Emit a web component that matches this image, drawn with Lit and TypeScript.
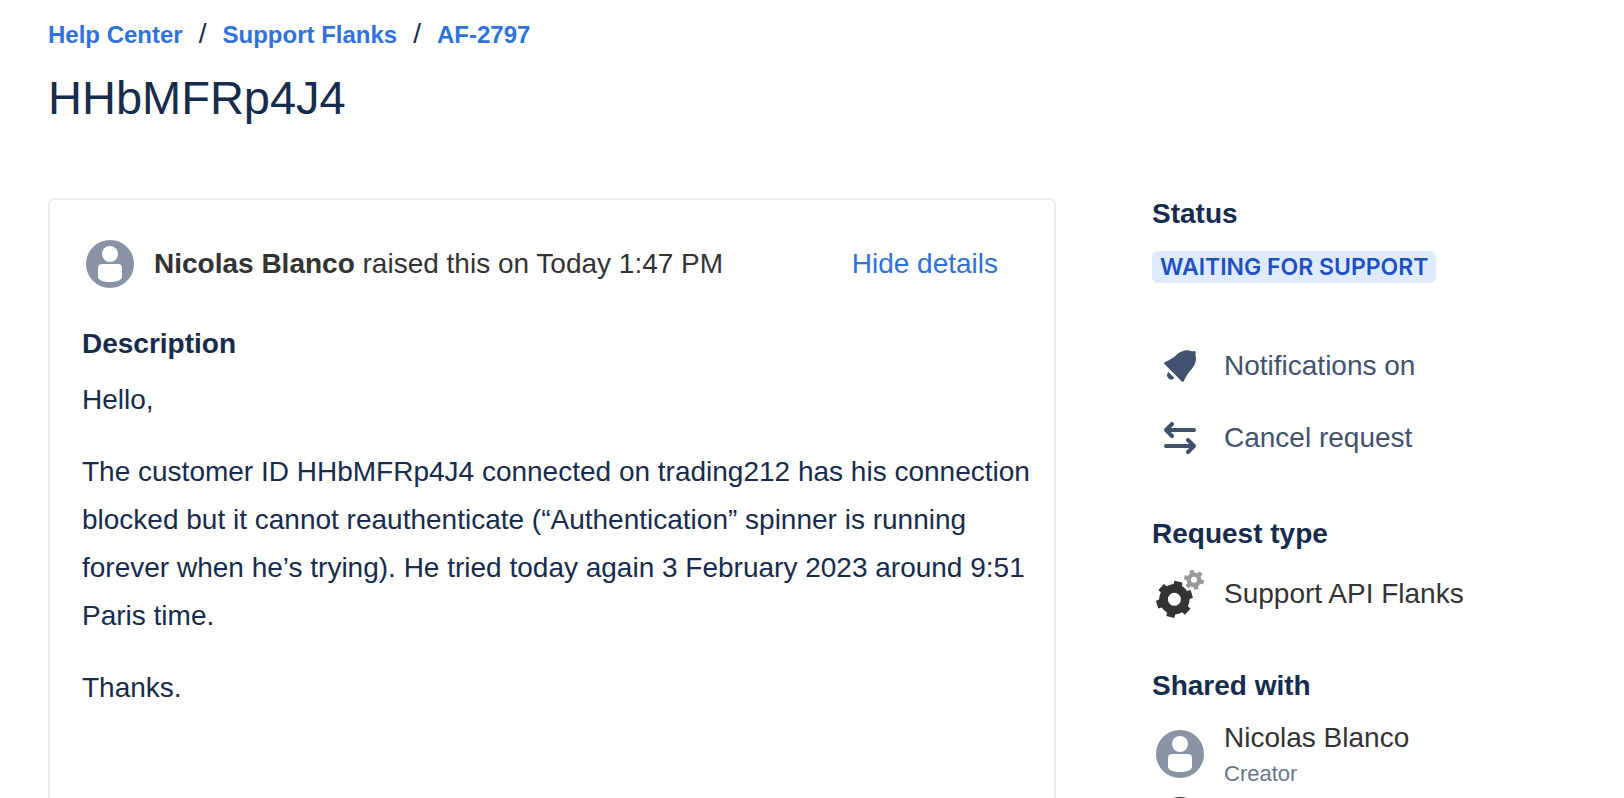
import { LitElement, html, svg, css } from "lit";
import { customElement, state } from "lit/decorators.js";

/** Outline of a toothed wheel centred on (cx, cy). */
function gearPath(cx: number, cy: number, outer: number, root: number, hole: number, teeth: number, turn: number): string {
  const point = (r: number, a: number) => `${(cx + r * Math.cos(a)).toFixed(2)} ${(cy + r * Math.sin(a)).toFixed(2)}`;
  const step = (Math.PI * 2) / teeth;
  const parts: string[] = [];
  for (let i = 0; i < teeth; i++) {
    const a = turn + i * step;
    parts.push(`${i ? "L" : "M"}${point(root, a - step * 0.27)}`);
    parts.push(`L${point(outer, a - step * 0.21)}`);
    parts.push(`L${point(outer, a + step * 0.21)}`);
    parts.push(`L${point(root, a + step * 0.27)}`);
    parts.push(`A${root} ${root} 0 0 1 ${point(root, a + step * 0.73)}`);
  }
  parts.push(`ZM${cx - hole} ${cy}a${hole} ${hole} 0 1 0 ${hole * 2} 0a${hole} ${hole} 0 1 0 ${-hole * 2} 0Z`);
  return parts.join("");
}

const rad = (deg: number) => (deg * Math.PI) / 180;

const personIcon = (fill: string) => html`<svg class="icon" viewBox="0 0 48 48" aria-hidden="true">
  <circle cx="24" cy="24" r="24" fill=${fill}></circle>
  <circle cx="24" cy="14" r="8" fill="#fff"></circle>
  <path d="M12 28a4 4 0 0 1 4-4h16a4 4 0 0 1 4 4v9c0 3-6 5-12 5s-12-2-12-5z" fill="#fff"></path>
</svg>`;

const bellIcon = html`<svg class="icon" viewBox="0 0 48 48" aria-hidden="true">
  <path d="M8.500 22 25.800 39.400c.6.6 1.500.5 1.900-.2C30.300 34.800 31.300 31.600 34.800 28 39 23.800 41.200 18.400 39.300 12.300c.8-1 .7-2-.1-2.800-.8-.7-1.900-.8-2.800-.1C30.500 7 25.400 8.500 20.700 12.800 17.200 16 14 18 8.800 20.200c-.8.400-.9 1.200-.3 1.800z" fill="currentColor"></path>
  <path d="M12.600 30.600a3.600 3.600 0 0 0 5.200 5.400z" fill="currentColor" stroke="currentColor" stroke-width="1" stroke-linejoin="round"></path>
</svg>`;

const swapIcon = html`<svg class="icon" viewBox="0 0 48 48" aria-hidden="true">
  <path d="M38 16H10M16 10l-6 6 6 6M10 32h28M32 26l6 6-6 6" fill="none" stroke="currentColor" stroke-width="4" stroke-linecap="round" stroke-linejoin="round"></path>
</svg>`;

const gearsIcon = html`<svg class="icon" viewBox="0 0 48 48" aria-hidden="true">
  ${svg`<path fill="#333" fill-rule="evenodd" d=${gearPath(18.4, 29.3, 18.6, 15.2, 6.5, 6, rad(-77))}></path>
  <path fill="#999" fill-rule="evenodd" d=${gearPath(38, 9.8, 10.2, 7.4, 3, 6, rad(-105))}></path>`}
</svg>`;

@customElement("app-root")
export class AppRoot extends LitElement {
  @state() private open = true;

  static styles = css`
    :host {
      display: block;
      box-sizing: border-box;
      height: 100vh;
      overflow: hidden;
      padding: 16px 48px 0;
      background: #fff;
      color: #172b4d;
      font: 28px/32px Arial, "Liberation Sans", sans-serif;
    }
    a {
      color: #2f72de;
      text-decoration: none;
    }
    button {
      border: 0;
      padding: 0;
      background: none;
      font: inherit;
      color: inherit;
      text-align: left;
      cursor: pointer;
    }
    h1, h2, p, ol, ul {
      margin: 0;
      padding: 0;
      list-style: none;
    }
    h1 {
      margin-top: 17px;
      font-size: 47px;
      line-height: 56px;
      font-weight: 400;
    }
    h2 {
      font-size: 28px;
      line-height: 32px;
      font-weight: 700;
    }
    .crumbs {
      display: flex;
      align-items: baseline;
      line-height: 36px;
    }
    .crumbs a {
      font-size: 24px;
      font-weight: 700;
    }
    .crumbs li + li::before {
      content: "/";
      padding: 0 16px;
    }
    .layout {
      display: grid;
      grid-template-columns: minmax(0, 1fr) 424px;
      column-gap: 96px;
      margin-top: 72px;
    }
    .card {
      min-height: 100vh;
      box-sizing: border-box;
      border: 2px solid #ebecf0;
      border-radius: 6px;
      padding: 36px 20px 36px 32px;
    }
    .raised {
      display: flex;
      align-items: center;
      gap: 16px;
      padding-right: 36px;
      margin-bottom: 36px;
      color: #333;
    }
    .raised p {
      flex: 1;
    }
    .toggle {
      color: #2f72de;
    }
    .icon {
      display: block;
      width: 48px;
      height: 48px;
      margin: 4px;
      flex: none;
    }
    .body {
      display: grid;
      gap: 24px;
      margin-top: 16px;
      line-height: 48px;
    }
    .lozenge {
      display: block;
      width: fit-content;
      margin-top: 21px;
      padding: 0 8px;
      border-radius: 6px;
      background: #deebff;
      color: #1f4fc4;
      font: 600 23px/32px Inter, sans-serif;
      text-transform: uppercase;
    }
    .actions {
      display: grid;
      gap: 16px;
      margin: 55px 0 52px;
      color: #42526e;
    }
    .row {
      display: flex;
      align-items: center;
      gap: 16px;
    }
    .type {
      margin: 16px 0 48px;
      color: #333;
    }
    .people {
      display: grid;
      gap: 7px;
      margin-top: 20px;
      color: #333;
    }
    .role {
      display: block;
      margin-top: 8px;
      font-size: 22px;
      line-height: 24px;
      color: #6b778c;
    }
  `;

  render() {
    return html`
      <nav aria-label="Breadcrumb">
        <ol class="crumbs">
          <li><a href="#help">Help Center</a></li>
          <li><a href="#support">Support Flanks</a></li>
          <li><a href="#request">AF-2797</a></li>
        </ol>
      </nav>
      <h1>HHbMFRp4J4</h1>
      <div class="layout">
        <main class="card">
          <div class="raised">
            ${personIcon("#8993a4")}
            <p><strong>Nicolas Blanco</strong> raised this on Today 1:47 PM</p>
            <button class="toggle" aria-expanded=${this.open} @click=${() => (this.open = !this.open)}>
              ${this.open ? "Hide details" : "Show details"}
            </button>
          </div>
          ${this.open
            ? html`<h2>Description</h2>
                <div class="body">
                  <p>Hello,</p>
                  <p>The customer ID HHbMFRp4J4 connected on trading212 has his connection blocked but it cannot reauthenticate (“Authentication” spinner is running forever when he’s trying). He tried today again 3 February 2023 around 9:51 Paris time.</p>
                  <p>Thanks.</p>
                </div>`
            : null}
        </main>
        <aside>
          <h2>Status</h2>
          <span class="lozenge">Waiting for support</span>
          <div class="actions">
            <button class="row">${bellIcon}<span>Notifications on</span></button>
            <button class="row">${swapIcon}<span>Cancel request</span></button>
          </div>
          <h2>Request type</h2>
          <div class="row type">${gearsIcon}<span>Support API Flanks</span></div>
          <h2>Shared with</h2>
          <ul class="people">
            <li class="row">${personIcon("#8993a4")}<span>Nicolas Blanco<span class="role">Creator</span></span></li>
            <li class="row">${personIcon("#333")}</li>
          </ul>
        </aside>
      </div>
    `;
  }
}
